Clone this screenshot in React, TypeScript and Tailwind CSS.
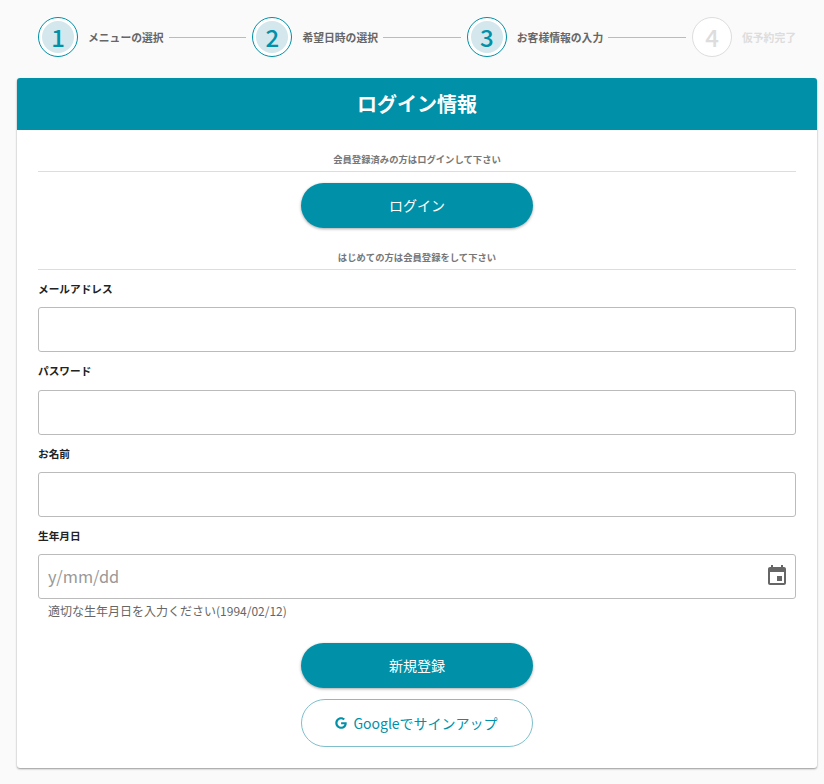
import React from "react";
import { FaGoogle } from "react-icons/fa";

function Step({ n, label, active = true, line = true }: { n: number; label: string; active?: boolean; line?: boolean }) {
  return (
    <>
      <div className={active ? "w-10 h-10 shrink-0 rounded-full border border-[#0090a8] p-[3px] bg-white" : "w-10 h-10 shrink-0 rounded-full border border-[#dddddd] p-[3px] bg-white"}>
        <div className={active ? "w-full h-full rounded-full bg-[#d3e7ec] flex items-center justify-center pb-[1px] text-[#0090a8] text-[24px] font-medium leading-none" : "w-full h-full rounded-full flex items-center justify-center pb-[1px] text-[#dddddd] text-[24px] font-medium leading-none"}>
          {n}
        </div>
      </div>
      <div className={active ? "ml-[10px] text-[10.8px] font-bold leading-4 whitespace-nowrap text-[#666666]" : "ml-[10px] text-[10.8px] font-bold leading-4 whitespace-nowrap text-[#dddddd]"}>{label}</div>
      {line && <div className="flex-1 h-px bg-[#bbbbbb] ml-[5px] mr-[6px]" />}
    </>
  );
}

function Section({ children }: { children: React.ReactNode }) {
  return <div className="border-b border-[#dddddd] text-center text-[9.33px] font-bold text-[#777777] leading-[15px] pt-[1px] pb-[4px]">{children}</div>;
}

function Field({ label, mt, shift }: { label: string; mt: string; shift?: boolean }) {
  return (
    <div className={mt}>
      <div className={shift ? "text-[10.67px] font-bold text-[#222222] leading-4 -mt-[1px] pb-[1px]" : "text-[10.67px] font-bold text-[#222222] leading-4"}>{label}</div>
      <input className="mt-[10px] block w-full h-[45px] border border-[#bbbbbb] rounded-[3px] bg-white outline-none" />
    </div>
  );
}

export default function App() {
  return (
    <div className="w-[824px] h-[784px] overflow-hidden bg-[#fafafa] pt-[17px] pl-[17px] pr-[7px] font-['Noto_Sans_CJK_JP','Noto_Sans',sans-serif]">
      <div className="flex items-center px-[21px] h-10">
        <Step n={1} label="メニューの選択" />
        <Step n={2} label="希望日時の選択" />
        <Step n={3} label="お客様情報の入力" />
        <Step n={4} label="仮予約完了" active={false} line={false} />
      </div>

      <div className="mt-[21px] h-[690px] rounded-[3px] bg-white shadow-[0_1px_2px_rgba(0,0,0,0.4)] overflow-hidden">
        <div className="h-[52px] bg-[#0090a8] text-white text-[20px] font-bold flex items-center justify-center">ログイン情報</div>
        <div className="px-[21px] pt-[21px]">
          <Section>会員登録済みの方はログインして下さい</Section>
          <div className="mt-[11px] flex justify-center">
            <button className="w-[232px] h-[45px] rounded-full bg-[#0090a8] text-white text-[14px] shadow-[0_1px_3px_rgba(0,0,0,0.35)]">ログイン</button>
          </div>
          <div className="mt-[21px]">
            <Section>はじめての方は会員登録をして下さい</Section>
          </div>
          <Field label="メールアドレス" mt="mt-[11px]" />
          <Field label="パスワード" mt="mt-[12px]" shift />
          <Field label="お名前" mt="mt-[11px]" />
          <div className="mt-[11px]">
            <div className="text-[10.67px] font-bold text-[#222222] leading-4">生年月日</div>
            <div className="relative mt-[10px]">
              <input placeholder="y/mm/dd" className="block w-full h-[45px] border border-[#bbbbbb] rounded-[3px] bg-white outline-none pl-[9px] pb-[2px] text-[16.4px] placeholder:text-[#999999]" />
              <svg className="absolute right-[7px] top-[10px]" width="24" height="24" viewBox="0 0 24 24" fill="#666666">
                <path d="M17 12h-5v5h5v-5zM16 1v2H8V1H6v2H5c-1.11 0-1.99.9-1.99 2L3 19c0 1.1.89 2 2 2h14c1.1 0 2-.9 2-2V5c0-1.1-.9-2-2-2h-1V1h-2zm3 18H5V8h14v11z" />
              </svg>
            </div>
            <div className="mt-[4px] pl-[10px] text-[12px] leading-4 text-[#666666]">適切な生年月日を入力ください(1994/02/12)</div>
          </div>
          <div className="mt-[24px] flex flex-col items-center gap-[11px]">
            <button className="w-[232px] h-[45px] rounded-full bg-[#0090a8] text-white text-[14px] shadow-[0_1px_3px_rgba(0,0,0,0.35)]">新規登録</button>
            <button className="w-[232px] h-[48px] rounded-full bg-white border border-[#7fbfcc] text-[#0090a8] text-[14px] flex items-center justify-center gap-[6px] pr-[1px]">
              <FaGoogle className="text-[12px]" />
              <span>Googleでサインアップ</span>
            </button>
          </div>
        </div>
      </div>
    </div>
  );
}
